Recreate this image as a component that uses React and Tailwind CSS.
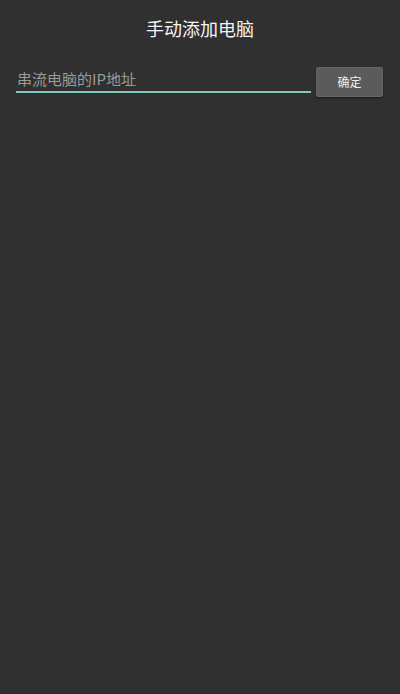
// App.jsx
// Écran "手动添加电脑" : saisie manuelle de l'adresse IP

export default function App() {
  return (
    <div
      className="w-[400px] h-[694px] bg-[#303030] text-white"
      style={{ fontFamily: '"Noto Sans CJK SC", Roboto, sans-serif' }}
    >
      <div className="h-[56px] flex items-center justify-center">
        <h1 className="text-[18px] leading-none text-[#f5f5f5]">手动添加电脑</h1>
      </div>

      <div className="flex items-end pl-[16px] pr-[17px] pt-[8px] gap-[5px]">
        <div className="flex-1 border-b-2 border-[#7fcbc0] pb-[1px] pt-[2px]">
          <input
            className="w-full bg-transparent outline-none text-[15px] leading-[20px] text-white placeholder:text-[#9a9a9a] pl-[1px]"
            placeholder="串流电脑的IP地址"
          />
        </div>
        <button className="w-[67px] h-[30px] mb-[-4px] rounded-[2px] bg-[#5b5b5b] border border-[#666] text-[12px] text-[#f0f0f0] shadow-[0_1px_2px_rgba(0,0,0,0.5)]">
          确定
        </button>
      </div>
    </div>
  );
}
